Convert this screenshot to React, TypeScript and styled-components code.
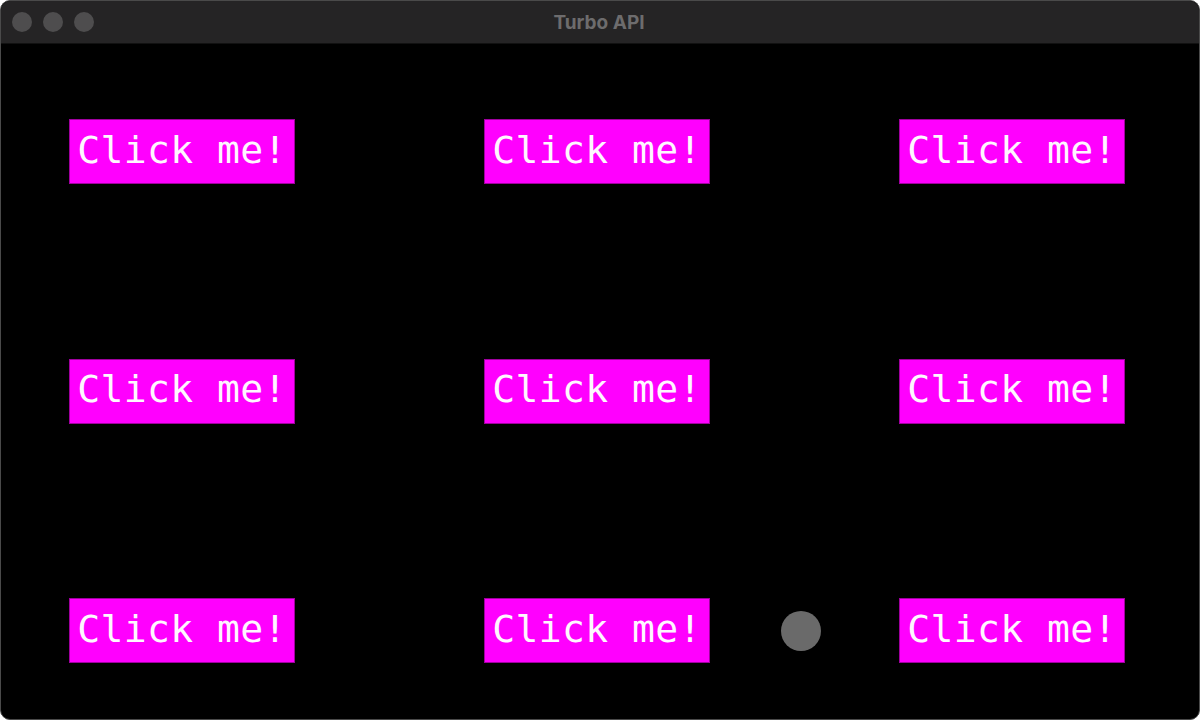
import React from "react";
import styled, { createGlobalStyle } from "styled-components";

const GlobalStyle = createGlobalStyle`
  html, body {
    margin: 0;
    padding: 0;
    background: #ffffff;
  }
  #root {
    width: 1200px;
    height: 720px;
  }
`;

const Window = styled.div`
  width: 1200px;
  height: 720px;
  box-sizing: border-box;
  border-radius: 10px;
  overflow: hidden;
  display: flex;
  flex-direction: column;
  background: #000;
  border: 1px solid #4a4a4a;
  position: relative;
`;

const TitleBar = styled.div`
  height: 42px;
  flex-shrink: 0;
  background: #252425;
  border-bottom: 1px solid #111;
  position: relative;
  display: flex;
  align-items: center;
  justify-content: center;
`;

const Lights = styled.div`
  position: absolute;
  left: 11px;
  top: 11px;
  display: flex;
  gap: 11px;
`;

const Light = styled.span`
  width: 20px;
  height: 20px;
  border-radius: 50%;
  background: #4e4d4e;
`;

const Title = styled.div`
  font-family: "Inter", "Liberation Sans", sans-serif;
  font-weight: 700;
  font-size: 19px;
  color: #6d6c6d;
  margin-left: -2px;
`;

const Content = styled.div`
  flex: 1;
  position: relative;
  display: grid;
  grid-template-columns: repeat(3, 226px);
  grid-template-rows: repeat(3, 65px);
  column-gap: 189px;
  justify-content: start;
  align-content: space-between;
  padding: 75px 0 56px 68px;
`;

const PixelButton = styled.button`
  width: 226px;
  height: 65px;
  margin: 0;
  padding: 0 0 4px 0;
  background: #ff00fe;
  border: 1px solid #a0009f;
  box-sizing: border-box;
  color: #fff7ff;
  font-family: "DejaVu Sans Mono", "Liberation Mono", monospace;
  font-size: 38px;
  letter-spacing: 0.4px;
  line-height: 1;
  text-align: center;
  cursor: pointer;
`;

const Cursor = styled.div`
  position: absolute;
  left: 780px;
  top: 567px;
  width: 40px;
  height: 40px;
  border-radius: 50%;
  background: #6a6a6a;
`;

export default function App() {
  const buttons = Array.from({ length: 9 });
  return (
    <>
      <GlobalStyle />
      <Window>
        <TitleBar>
          <Lights>
            <Light />
            <Light />
            <Light />
          </Lights>
          <Title>Turbo API</Title>
        </TitleBar>
        <Content>
          {buttons.map((_, i) => (
            <PixelButton key={i}>Click me!</PixelButton>
          ))}
          <Cursor />
        </Content>
      </Window>
    </>
  );
}
